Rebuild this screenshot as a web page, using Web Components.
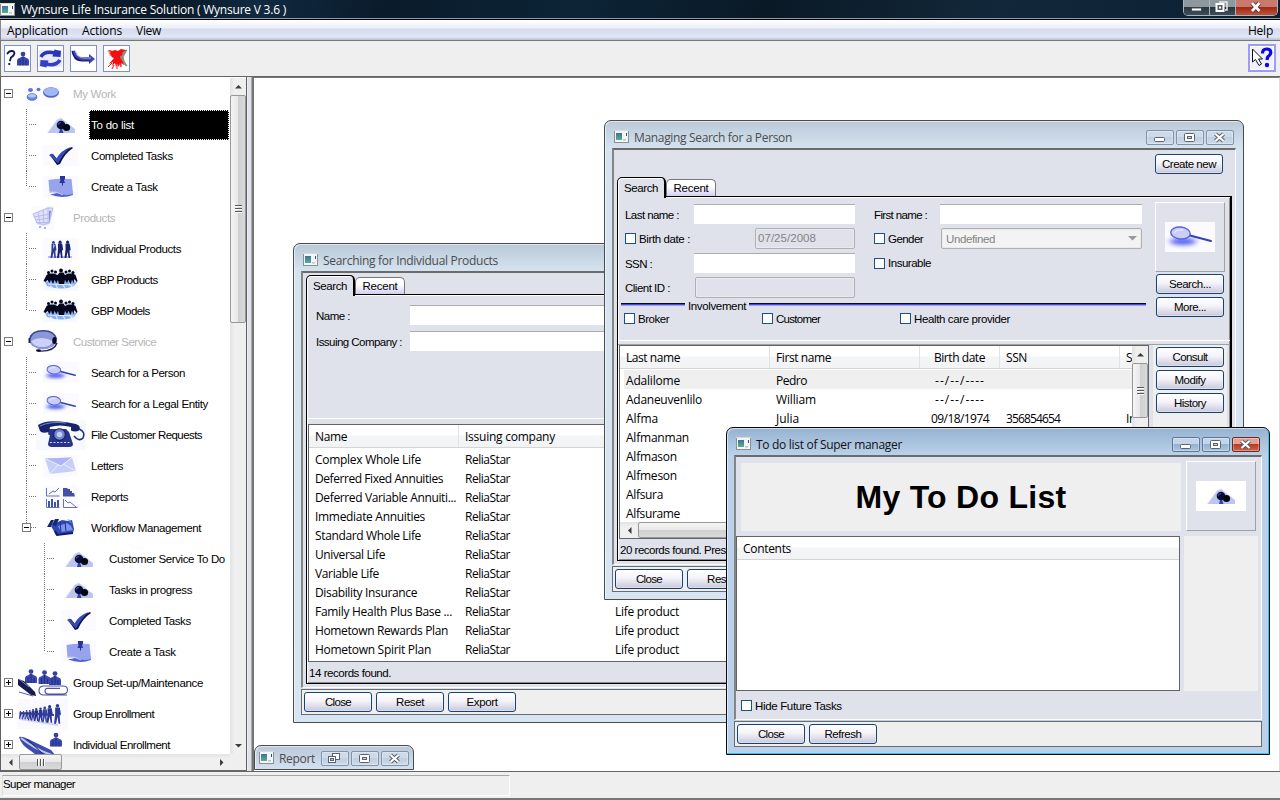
<!DOCTYPE html>
<html lang="en">
<head>
<meta charset="utf-8">
<title>Wynsure Life Insurance Solution</title>
<style>
html,body{margin:0;padding:0;width:1280px;height:800px;overflow:hidden;background:#efefef}
</style>
</head>
<body>
<wyn-app></wyn-app>
<script>
const t = (text, w) => `<fit-text w="${w}">${text}</fit-text>`;
const def = (name, build) => customElements.define(name, class extends HTMLElement {
  connectedCallback() {
    if (this.shadowRoot) return;
    this.attachShadow({mode: 'open'}).innerHTML = build(this);
  }
});

/* ---------- pictures, all on a 50 x 30 canvas ---------- */
const glass = `<rect width="50" height="30" fill="#fbfbff"/><ellipse cx="18" cy="19.500" rx="13" ry="3.800" fill="#4a58ec" filter="url(#b)" opacity=".9"/><path d="M25 13.500L46 19" stroke="#3340b8" stroke-width="2" stroke-linecap="round"/><ellipse cx="15.500" cy="11" rx="9.800" ry="6" fill="#c9cdf8" stroke="#5964d8" stroke-width="1.400" transform="rotate(6 15.500 11)"/><path d="M9 11q3-4 9-3" stroke="#f2f3ff" fill="none"/>`;
const man = (x, y, s = 1) => `<g transform="translate(${x} ${y}) scale(${s})"><circle cx="6" cy="2.600" r="2.400" fill="#3540a0"/><path d="M0 14V9q0-2 3-2.800L5 5h2l2 1.200Q12 7 12 9v5z" fill="#3a48b0"/><path d="M6 5v9M3 8v6M9 9v5" stroke="#1b2470" stroke-width=".8"/></g>`;
const walker = (x, y, s, c) => `<g transform="translate(${x} ${y}) scale(${s})" fill="${c}"><circle cx="3" cy="1.600" r="1.500"/><path d="M1 3h4l1 6-1 1-.3-2L5.400 17H4L3 11 1.800 17H0L1 9z"/></g>`;
const pics = {
  work: `<rect x="8" y="4" width="34" height="22" fill="#fcfcff"/><ellipse cx="12.500" cy="11" rx="2.500" ry="1.900" fill="#5f76dc"/><ellipse cx="20.500" cy="10.500" rx="2" ry="1.800" fill="#5f76dc"/><ellipse cx="14" cy="18" rx="4.800" ry="3.200" fill="#6f86e0" stroke="#5a70cc"/><ellipse cx="14" cy="16.800" rx="4" ry="1.800" fill="#b6c6f8"/><ellipse cx="33" cy="13.500" rx="8" ry="5.200" fill="#5067c8"/><ellipse cx="33" cy="12.700" rx="7.200" ry="4.200" fill="#a3b7f4"/>`,
  pin: `<path d="M11.500 23L21.500 9.500 25 8 39 19v4z" fill="#bcc4f0"/><path d="M11.500 23L21 10l4-2" stroke="#d8dcf8" fill="none"/><path d="M22.500 15l3 2 2 6h-4.500l1-4z" fill="#3244b4"/><circle cx="25" cy="15" r="4.300" fill="#0a0f30"/><circle cx="30.500" cy="17.500" r="3.600" fill="#050714"/><path d="M22 14.500q1-2 3-2" stroke="#3a4cc0" fill="none" stroke-width="1.200"/>`,
  check: `<rect x="7" y="4" width="35" height="21" fill="#fafaff"/><path d="M14 14l3-1 4 5Q26 9 36 6l1 1Q29 12 24 23l-3 1z" fill="#0c1448"/><path d="M13 14l3-1.500 4.500 5Q25 9.500 34.500 6 27 13 22 22.500z" fill="#3649b8"/>`,
  note: `<rect x="7" y="4" width="35" height="22" fill="#fafaff"/><path d="M14 22.500q12 4.500 23 .5l-1-5z" fill="#5261cc"/><path d="M12.500 8q9-2 23-1l1.500 15q-6 1.500-10 .5-6-3-13.500-2z" fill="#98a3ee"/><path d="M13 20q8-1 14 3" stroke="#c5ccfa" fill="none"/><path d="M24 4h5v3l-1 1 1 3h-2v2.500h-1V11h-2.500l1-3-.5-1z" fill="#26349c"/>`,
  cart: `<rect x="13" y="3" width="23" height="24" fill="#fafaff"/><path d="M15 11l15-7 5 1-3 16q-8 4-13 0z" fill="#dfe1fa"/><path d="M15 11l15-6 5 0M16 14l16-3M17 17l15-2M18 19.500h13M20 9.500l2 11M25 7l1 14M30 5l0 15M15 11l4 9q7 3 12 0l4-15" stroke="#b3b8ea" fill="none" stroke-width=".9"/><path d="M31 8l2-.5-2 13z" fill="#7e88d8"/><circle cx="27" cy="25" r="1" fill="#9197dc"/><circle cx="22" cy="24" r="1" fill="#9197dc"/>`,
  people: `<rect x="7" y="4" width="35" height="22" fill="#fafaff"/><path d="M12 23h24" stroke="#b4bcf0" stroke-width="2"/>${walker(14.500, 7, 1, '#2b3a98')}${walker(21, 6.500, 1.030, '#18216c')}${walker(28.500, 6.500, 1.030, '#18216c')}<path d="M17 9l2 3-2 3z" fill="#9fb0ee"/>`,
  crowd: `<rect x="7" y="4" width="35" height="22" fill="#f6f9ff"/><path d="M9 17q16-4 32 0l-3 4q-12 5-27 0z" fill="#86aef0"/><path d="M14 21l3 2M20 20l2 4M27 20l2 3M33 19l3 3M12 19l26 1" stroke="#e2efff" stroke-width="1.200"/><g fill="#04071c"><circle cx="12.500" cy="7.500" r="1.500"/><circle cx="16" cy="6" r="1.500"/><circle cx="19.500" cy="7" r="1.500"/><circle cx="25" cy="5.500" r="1.900"/><circle cx="30" cy="7" r="1.500"/><circle cx="33.500" cy="6" r="1.500"/><circle cx="37" cy="7.500" r="1.500"/><path d="M7.500 16l3-6 2.500-1.500h5l3.500 1.500 2-2.500h4l1.500 2.500 3-1.500h5l2.500 1.500 2 6-1 1-2-3-1 4-1.500-3-1.500 4-2-4-1.500 3-2-3-1 4h-5l-1-4-1.500 3-2-3-1.500 4-2-4-1.500 3-2-3-2 2z"/></g>`,
  headset: `<path d="M20 24q16 1 19-8" stroke="#20264e" stroke-width="1.400" fill="none"/><ellipse cx="25" cy="13" rx="13.500" ry="9.300" fill="#8c96da"/><path d="M12 11Q14 4 25 3.700T38.500 12" stroke="#39468c" stroke-width="1.500" fill="none"/><path d="M13 14q10-6 22 0-2 6-11 6-8 0-11-6z" fill="#cdd1f8"/><ellipse cx="36.500" cy="13.500" rx="2.200" ry="3.600" fill="#070a22"/><path d="M11.500 11v5" stroke="#1d2554" stroke-width="2"/><ellipse cx="20.500" cy="23.500" rx="2.500" ry="1.200" fill="#0b0e30"/>`,
  glass: `<g transform="translate(7 4) scale(.7)">${glass}</g>`,
  bigglass: glass,
  phone: `<rect width="50" height="30" fill="#f8f8ff"/><path d="M13 9q-2 7 1 6l-2 9q0 3 4 3h17q4 0 4-3L33 12l-3-3z" fill="#26348e"/><path d="M2 5Q9 0 24 1.500T42 5q3 2 1 5.500-4 2-8 0V7q-11-3-21 0L13 12q-7 2-9-1z" fill="#17236a"/><path d="M4 6Q14 1 30 3" stroke="#7286d8" fill="none"/><circle cx="23.500" cy="14.500" r="5.800" fill="#7283cf" stroke="#0c154c"/><circle cx="23.500" cy="14.500" r="2.800" fill="#c3cdf4"/><path d="M43 9q7 3 4 9-4 4-9-2" stroke="#202d7c" stroke-width="1.600" fill="none"/><path d="M14 22.500h20" stroke="#c7d1ff" stroke-dasharray="2 1.500"/>`,
  letter: `<rect x="7" y="4" width="35" height="22" fill="#fafaff"/><path d="M9 7.500L36 6.500 40 20 14 23z" fill="#c6cefa"/><path d="M9 7.500L25 15 36 6.500" fill="#aab5f2" stroke="#eef0ff"/><path d="M14 23l8-9M40 20L27 13" stroke="#eef0ff" fill="none"/>`,
  reports: `<rect x="7" y="4" width="35" height="22" fill="#fafaff"/><g stroke="#6570c4" fill="none"><path d="M10.500 6v8h13M13 12l4-3 2 1 4-4M10.500 17v8.500h13M27.500 17v8.500h14M29 18l3 3 2-1 6 5"/></g><path d="M27 6h4l1 1h2v2h2v2h2l1 3.500H27z" fill="#4450a8"/><g fill="#4350b4"><path d="M12 19h2v6h-2zM15 17h2v8h-2zM18 20h2v5h-2zM21 18h2v7h-2z"/></g>`,
  workflow: `<path d="M15 13l7-4 4-2 6 1 4-1 2 9-1 4-17 2z" fill="#3148b8"/><path d="M11 14l4-7h3l-3 7zM16 12l3-6h4l-3 7z" fill="#152674"/><path d="M22 13l9-3 4 3 2 4-12 2zM31 6l3 1 2 4" fill="#7c94ea"/><path d="M19 18l2 4 16-2" stroke="#0f1a68" fill="none" stroke-width="2"/><path d="M24 9l1 10M29 9l1 9" stroke="#1b2f90"/>`,
  setup: `${man(7, 1)}${man(20.500, 2)}${man(31, 3)}<path d="M0 11l6 2 11 11 1 4-5-1L0 17z" fill="#171d50"/><path d="M1 11l10 8" stroke="#7d87e0"/><path d="M1 24l14 4" stroke="#5a55cc"/><path d="M49 27H25q-4-.4-4-4.500t4-4.500h20q4.500 0 4.500 4T45 26H30q-3-.2-3-3t3-2.600h12" stroke="#4a51aa" stroke-width="1.100" fill="#fff"/>`,
  enroll: `<rect width="50" height="30" fill="#f9f9ff"/><path d="M0 19L40 25v2L2 21z" fill="#cfd4f8"/>${walker(1, 12, .45, '#2a3694')}${walker(4, 12, .48, '#2a3694')}${walker(7, 11, .55, '#2a3694')}${walker(10, 11, .6, '#232f8e')}${walker(13, 10, .68, '#2a3694')}${walker(16, 9, .76, '#202b88')}${walker(20, 8.500, .84, '#2a3694')}${walker(24, 7.500, .92, '#3442a4')}${walker(28.500, 6, 1.050, '#2a3694')}${walker(36, 5, 1.160, '#2d3a9e')}<path d="M2 14l34 2" stroke="#303c9c" stroke-width="2"/>`,
  individual: `${man(32, 2.500)}<path d="M1 7q3-1 9 2l23 11 5 6v5H26L13 21Q3 15 1 7z" fill="#3d4cac"/><path d="M3 8q15 12 31 17" stroke="#bcc6f8" stroke-width="2" fill="none"/><path d="M9 9l16 15" stroke="#1a2468"/>`
};
def('wy-icon', e => `<style>:host{display:block;width:50px;height:30px;flex:none}svg{display:block}</style>
<svg width="50" height="30" viewBox="0 0 50 30"><defs><filter id="b" x="-30%" y="-100%" width="160%" height="300%"><feGaussianBlur stdDeviation="3 2"/></filter></defs>${pics[e.getAttribute('name')]}</svg>`);

/* ---------- small controls ---------- */
def('app-icon', () => `<style>:host{display:block;width:15px;height:13px;flex:none}svg{display:block}</style>
<svg width="15" height="13"><defs><linearGradient id="g" x2="0" y2="1"><stop stop-color="#3e70a0"/><stop offset="1" stop-color="#58b08c"/></linearGradient></defs><rect x=".5" y=".5" width="14" height="12" fill="#f4f6f6" stroke="#8b8f92"/><path d="M0 .5h15" stroke="#d9d9d9"/><rect x="2" y="3" width="6" height="7" fill="url(#g)"/><path d="M12 3h1v3h-1z" fill="#2c4c80"/><path d="M9 9h3v1.500H9z" fill="#c0c4c8"/></svg>`);

def('xp-button', e => `<style>:host{display:flex;box-sizing:border-box;width:68px;height:20px;flex:none;align-items:center;justify-content:center;
border:1px solid #174373;border-radius:3px;background:linear-gradient(#fff,#f4f3fa 45%,#c9c8da);box-shadow:inset 0 0 0 1px rgba(255,255,255,.35)}</style>${t(e.getAttribute('label'), e.getAttribute('w'))}`);

def('xp-check', e => `<style>:host{display:flex;align-items:center;height:15px;gap:3px}i{box-sizing:border-box;width:11px;height:11px;border:1px solid #1c5180;background:#fff;flex:none}</style><i></i>${t(e.getAttribute('label'), e.getAttribute('w'))}`);

def('xp-field', () => `<style>:host{display:flex;align-items:center;box-sizing:border-box;height:20px;background:#fff;border-top:1px solid #abadb3;color:#838383}
:host([off]){height:21px;border:1px solid #b0b0b3;background:#dfe1eb;border-radius:2px;padding:0 2px 2px;box-shadow:inset 0 0 0 1px #e9e9ee}
:host([drop]){background:#f3f3f3;padding:0 4px;justify-content:space-between}</style><slot></slot>`);

def('picture-box', e => `<style>:host{display:grid;place-items:center;box-sizing:border-box;width:70px;height:70px;border:1px solid #fff;border-right-color:#a0a0a0;border-bottom-color:#a0a0a0}wy-icon{background:#fff}</style><wy-icon name="${e.getAttribute('name')}"></wy-icon>`);

def('scroll-bar', e => {
  const v = !e.hasAttribute('h');
  const a = e.getAttribute('thumb');
  const arrow = d => `<svg width="9" height="9" viewBox="0 0 9 9"><path d="${d}" fill="#3c3c3c"/></svg>`;
  return `<style>:host{display:flex;flex-direction:${v ? 'column' : 'row'};${v ? 'width' : 'height'}:16px;flex:none;background:linear-gradient(${v ? '90deg' : '180deg'},#e3e3e3,#f0f0f0 30%,#efefef)}
span{display:grid;place-items:center;flex:none;${v ? 'height:17px' : 'width:18px'}}
b{box-sizing:border-box;flex:none;display:grid;place-items:center;border:1px solid #979797;border-radius:2px;background:linear-gradient(${v ? '90deg' : '180deg'},#f5f5f5 0,#e8e8ea 48%,#cfcfd2 52%,#dadadc);${v ? 'height' : 'width'}:${a}px}
i{display:block;${v ? 'width:7px;height:8px' : 'width:8px;height:7px'};background:repeating-linear-gradient(${v ? '180deg' : '90deg'},#555 0 1px,#fff 1px 2px,transparent 2px 3px)}
u{flex:1}</style>
<span>${arrow(v ? 'M4.500 3L8 6.500H1z' : 'M3 4.500L6.500 1v7z')}</span><b><i></i></b><u></u><span>${arrow(v ? 'M4.500 6.500L8 3H1z' : 'M6.500 4.500L3 1v7z')}</span>`;
});

/* ---------- tabs ---------- */
def('tab-page', () => `<style>:host{display:flex;flex-direction:column;min-height:0}
nav{display:flex;align-items:flex-end;height:19px;flex:none}
.s,.r{box-sizing:border-box;display:flex;justify-content:center;align-items:center}
.s{width:49px;height:21px;margin-bottom:-2px;position:relative;background:#dfe1eb;border:1px solid #000;border-right-width:2px;border-bottom:0;border-radius:5px 5px 0 0;box-shadow:inset 1px 1px #fff}
.r{width:50px;height:17px;margin-left:0;border:1px solid #777;border-bottom:0;border-radius:5px 5px 0 0;background:linear-gradient(#fff,#fff 40%,#d3cff0)}
section{flex:1;min-height:0;display:flex;flex-direction:column;border:1px solid #000;border-right-width:2px;box-shadow:inset 1px 1px #fff,inset -1px -1px #8a8a8f;padding:1px 0 1px 0}</style>
<nav><div class="s">${t('Search', 34)}</div><div class="r">${t('Recent', 35)}</div></nav><section><slot></slot></section>`);

/* ---------- list ---------- */
const products = {
  cols: [[150, 'Name', 32], [150, 'Issuing company', 90], [260, '', 0]],
  rows: [['Complex Whole Life', 106], ['Deferred Fixed Annuities', 128], ['Deferred Variable Annuiti...', 141], ['Immediate Annuities', 110], ['Standard Whole Life', 106], ['Universal Life', 70], ['Variable Life', 64], ['Disability Insurance', 102], ['Family Health Plus Base ...', 137], ['Hometown Rewards Plan', 133], ['Hometown Spirit Plan', 116]]
    .map((r, i) => [r, ['ReliaStar', 45], i > 7 ? ['Life product', 64] : ['', 0]])
};
const persons = {
  cols: [[150, 'Last name', 54], [150, 'First name', 55], [80, 'Birth date', 51, 1], [120, 'SSN', 21], [12, 'S', 7]],
  rows: [[['Adalilome', 54], ['Pedro', 31], ['--/--/----', 50]], [['Adaneuvenlilo', 76], ['William', 40], ['--/--/----', 50]],
    [['Alfma', 32], ['Julia', 23], ['09/18/1974', 58], ['356854654', 54], ['In', 10]], [['Alfmanman', 63]], [['Alfmason', 51]], [['Alfmeson', 51]], [['Alfsura', 37]], [['Alfsurame', 54]]]
};
const contents = {cols: [[440, 'Contents', 48]], rows: []};
const lists = {products, persons, contents};
def('list-view', e => {
  const d = lists[e.getAttribute('data')];
  const tpl = d.cols.map(c => c[0] + 'px').join(' ');
  const cell = (c, i) => `<div class="${d.cols[i][3] ? 'c' : ''}">${c && c[0] ? t(c[0], c[1]) : ''}</div>`;
  return `<style>:host{display:flex;flex-direction:column;box-sizing:border-box;background:#fff;border:1px solid #646464;font:12px "Open Sans","Noto Sans",sans-serif;overflow:hidden}
.top{display:flex;flex:1;min-height:0}.body{flex:1;overflow:hidden}
.h,.row{display:grid;grid-template-columns:${tpl};align-items:center}
.h{height:22px;border-bottom:1px solid #d5d5d5;background:linear-gradient(#fff 45%,#f4f5f7 50%,#f2f3f5)}
.h div{height:22px;border-right:1px solid #e2e3e5;box-sizing:border-box;display:flex;align-items:center}
.h div:last-child{border-right:0}
div.c{display:flex;justify-content:center;padding-left:0}
.row{height:19px}.rows{padding-top:1px}
.h div,.row div{padding-left:6px;padding-top:1px;white-space:nowrap;overflow:hidden}
.h div.c,.row div.c{padding-left:0}
:host([hot]) .row:first-child{background:linear-gradient(90deg,#fff 4px,#efefef 4px)}</style>
<div class="top"><div class="body"><div class="h">${d.cols.map((c, i) => cell([c[1], c[2]], i)).join('')}</div>
<div class="rows">${d.rows.map(r => `<div class="row">${r.map(cell).join('')}</div>`).join('')}</div></div><slot name="v"></slot></div><slot name="h"></slot>`;
});

/* ---------- window chrome ---------- */
const glyphs = {
  min: '<rect x="8.500" y="7.500" width="10" height="4" rx="1" fill="#fff" stroke="#5c6370"/>',
  max: '<rect x="8.500" y="3.500" width="10" height="8" rx="1" fill="#fff" stroke="#5c6370"/><rect x="11.500" y="6.500" width="4" height="2" fill="#c8d4e2" stroke="#5c6370"/>',
  restore: '<rect x="11.500" y="2.500" width="7" height="6" fill="#fff" stroke="#5c6370"/><rect x="7.500" y="5.500" width="7" height="6" fill="#fff" stroke="#5c6370"/><rect x="9.500" y="7.500" width="3" height="2" fill="#b8c6d8" stroke="#5c6370"/>',
  close: '<path d="M9.500 4l8 7M17.500 4l-8 7" stroke="#565d6a" stroke-width="4.200"/><path d="M9.500 4l8 7M17.500 4l-8 7" stroke="#fff" stroke-width="2.200"/>'
};
def('frame-button', e => `<style>:host{display:block;box-sizing:border-box;width:28px;height:15px;border:1px solid #8492a8;border-radius:2px;background:linear-gradient(#ccdaea 45%,#bfcfe1 50%,#cddbea);box-shadow:inset 0 0 0 1px rgba(255,255,255,.3);flex:none}
:host([hot]){border-color:#5f7796;background:linear-gradient(#c2d5ea 45%,#94b1d1 50%,#abc6e2)}
:host([hot][kind=close]){border-color:#6d2a2a;background:linear-gradient(#e2a394 45%,#b93a20 50%,#cf6648)}
svg{display:block;margin:-1px}</style><svg width="28" height="15">${glyphs[e.getAttribute('kind')]}</svg>`);

def('mdi-window', e => {
  const g = n => e.getAttribute(n), act = e.hasAttribute('active');
  const hot = act ? 'hot' : '', small = e.hasAttribute('small');
  return `<style>:host{position:absolute;left:${g('x')}px;top:${g('y')}px;width:${g('w')}px;height:${g('h')}px;box-sizing:border-box;display:flex;flex-direction:column;overflow:hidden;
border:1px solid ${act ? '#0a0a0a' : '#4b4b4b'};border-radius:7px 7px 0 0;padding:0 7px ${small ? 0 : 7}px;
background:${small ? 'linear-gradient(#b9c9d9,#d3e1ee)' : act ? 'linear-gradient(#97b3d1,#b9d1ea 27px,#b9d1ea)' : 'linear-gradient(#bac9d8,#d5e3f0 27px,#d7e4f1)'};
box-shadow:${act ? 'inset -1px -1px #35c4e8,' : ''}inset 1px 1px rgba(255,255,255,.55)}
header{display:flex;align-items:center;height:${small ? 24 : 27}px;flex:none;gap:2px;font:12px "Open Sans","Noto Sans",sans-serif;color:${act ? '#111' : '#4c4c4c'};padding:${small ? '1px 0 0' : '6px 2px 0 2px'};box-sizing:border-box;margin:${small ? '0 -3px' : '0'}}
app-icon{margin-top:-2px;margin-right:3px}
frame-button{margin-top:-1px}
.sp{flex:1}
main{flex:1;min-height:0;display:flex;flex-direction:column;background:#dfe1eb;border:2px solid #6b6b6b;border-left-color:#858585;border-right:1px solid #fff;border-bottom:1px solid #fff;${small ? 'display:none' : ''}}
footer{display:${small ? 'none' : 'flex'};box-sizing:border-box;height:26px;margin-top:1px;border:1px solid #6b6b6b;background:#efefef;gap:4px;padding:2px;flex:none}
</style><header><app-icon></app-icon>${t(g('caption'), g('cw'))}<span class="sp"></span><frame-button kind="${small ? 'restore' : 'min'}" ${hot}></frame-button><frame-button kind="max" ${hot}></frame-button><frame-button kind="close" ${hot}></frame-button></header>
<main><slot></slot></main><footer><slot name="actions"></slot></footer>`;
});

/* ---------- the three windows' forms ---------- */
def('product-search', () => `<style>:host{display:flex;flex:1;min-height:0;padding:2px 0 3px 3px}tab-page{flex:1}
.form{box-sizing:border-box;height:123px;border-bottom:1px solid #fff;display:grid;grid-template-columns:94px 1fr;grid-auto-rows:20px;row-gap:6px;padding:9px 0 0 9px;align-items:center;flex:none}
.form fit-text{padding-top:1px}
list-view{height:238px;margin:5px 0 0 1px;flex:none}p{margin:0;flex:1;display:flex;align-items:center;padding:1px 0 0 2px}</style>
<tab-page><div class="form">${t('Name :', 34)}<xp-field></xp-field>${t('Issuing Company :', 86)}<xp-field></xp-field></div><list-view data="products"></list-view><p>${t('14 records found.', 82)}</p></tab-page>`);

def('person-search', () => `<style>:host{display:flex;flex-direction:column;flex:1;min-height:0;padding:4px 3px 3px 3px}
.new{display:flex;justify-content:flex-end;height:23px;padding-right:9px;flex:none}
tab-page{flex:1}
.upper{display:flex;height:142px;border-bottom:1px solid #fff;flex:none}
.form{width:525px;padding:6px 0 0 3px;flex:none}
.g{display:grid;grid-template-columns:70px 160px 19px 67px 201px;grid-template-rows:20px 21px 20px 21px;row-gap:4px;align-items:center;padding-left:4px}
.g>fit-text{padding-top:1px}
.g>.d{width:100px;box-sizing:border-box;justify-self:end}
.g>xp-field:not([off]){margin-left:-1px}
.inv{display:flex;align-items:center;gap:3px;height:12px;margin:1px 0 0}
.inv fit-text{padding-top:1px}
.inv i{height:1px;background:#0a0a14;border-top:0;box-shadow:0 1px #4a48d8,0 2px #9c9cf2;width:64px;margin-top:-3px}.inv i:last-child{flex:1}
.ch{display:grid;grid-template-columns:138px 138px 1fr;padding-left:3px}
.side{width:70px;margin:4px 0 0 9px;display:flex;flex-direction:column;align-items:center;gap:3px}
.side picture-box{margin-bottom:-1px}
.low{display:flex;flex:1;min-height:0;margin-top:3px;border-top:1px solid #a0a0a0}
.lc{width:530px;margin-left:1px;display:flex;flex-direction:column}list-view{height:194px;flex:none}
p{margin:0;flex:1;display:flex;align-items:center;padding:1px 0 0 1px}
.btn{width:74px;margin:0 0 0 4px;background:#efefef;display:flex;flex-direction:column;align-items:center;gap:3px;padding-top:2px}</style>
<div class="new"><xp-button label="Create new" w="54"></xp-button></div>
<tab-page><div class="upper"><div class="form"><div class="g">
${t('Last name :', 54)}<xp-field></xp-field><span></span>${t('First name :', 53)}<xp-field></xp-field>
<xp-check label="Birth date :" w="51"></xp-check><xp-field off class="d">${t('07/25/2008', 58)}</xp-field><span></span><xp-check label="Gender" w="35"></xp-check><xp-field off drop>${t('Undefined', 49)}<svg width="9" height="5"><path d="M0 0h9L4.500 4.500z" fill="#9a9a9a"/></svg></xp-field>
${t('SSN :', 27)}<xp-field></xp-field><span></span><xp-check label="Insurable" w="43"></xp-check><span></span>
${t('Client ID :', 45)}<xp-field off></xp-field></div>
<div class="inv"><i></i>${t('Involvement', 58)}<i></i></div>
<div class="ch"><xp-check label="Broker" w="31"></xp-check><xp-check label="Customer" w="44"></xp-check><xp-check label="Health care provider" w="96"></xp-check></div></div>
<div class="side"><picture-box name="bigglass"></picture-box><xp-button label="Search..." w="42"></xp-button><xp-button label="More..." w="32"></xp-button></div></div>
<div class="low"><div class="lc"><list-view data="persons" hot><scroll-bar slot="v" thumb="55"></scroll-bar><scroll-bar slot="h" h thumb="300"></scroll-bar></list-view><p>${t('20 records found. Press', 111)}</p></div>
<div class="btn"><xp-button label="Consult" w="35"></xp-button><xp-button label="Modify" w="31"></xp-button><xp-button label="History" w="32"></xp-button></div></div></tab-page>`);

def('todo-list', () => `<style>:host{display:grid;grid-template-columns:444px 1fr;grid-template-rows:79px 155px 1fr;flex:1;min-height:0}
h1{margin:6px 0 5px 5px;width:440px;background:#efefef;display:grid;place-items:center;font:bold 32px "Liberation Sans",Arial,sans-serif}
picture-box{margin:4px 0 0 6px;justify-self:start}
.pane{background:#efefef;width:74px;margin-left:4px}
.f{padding:7px 0 0 5px;grid-column:span 2}</style>
<h1>${t('My To Do List', 211)}</h1><picture-box name="pin"></picture-box><list-view data="contents"></list-view><div class="pane"></div><div class="f"><xp-check label="Hide Future Tasks" w="87"></xp-check></div>`);

/* ---------- navigation tree ---------- */
const tree = [[1, 'work', 'My Work', 43, 'open dim'], [2, 'pin', 'To do list', 43, 'sel'], [2, 'check', 'Completed Tasks', 82], [2, 'note', 'Create a Task', 67, 'last'],
  [1, 'cart', 'Products', 42, 'open dim'], [2, 'people', 'Individual Products', 90], [2, 'crowd', 'GBP Products', 67], [2, 'crowd', 'GBP Models', 59, 'last'],
  [1, 'headset', 'Customer Service', 83, 'open dim'], [2, 'glass', 'Search for a Person', 94], [2, 'glass', 'Search for a Legal Entity', 117], [2, 'phone', 'File Customer Requests', 111], [2, 'letter', 'Letters', 32], [2, 'reports', 'Reports', 37], [2, 'workflow', 'Workflow Management', 110, 'open last'],
  [3, 'pin', 'Customer Service To Do', 116], [3, 'pin', 'Tasks in progress', 83], [3, 'check', 'Completed Tasks', 82], [3, 'note', 'Create a Task', 67, 'last'],
  [1, 'setup', 'Group Set-up/Maintenance', 130, 'shut'], [1, 'enroll', 'Group Enrollment', 81, 'shut'], [1, 'individual', 'Individual Enrollment', 97, 'shut']];
def('tree-row', e => {
  const [lv, icon, label, w, flags = ''] = tree[+e.getAttribute('index')];
  const x = 18 * lv, vx = x - 9.500;
  let s = '';
  if (lv > 1) s += `<path d="M${vx} 0V${flags.includes('last') ? 16 : 31}" stroke="#777" stroke-dasharray="1 1"/><path d="M${vx + 2.500} 15.500H${x}" stroke="#777" stroke-dasharray="1 1"/>`;
  if (/open|shut/.test(flags)) s += `<rect x="${x - 13.500}" y="11.500" width="8" height="8" fill="#fff" stroke="#7b7b7b"/><path d="M${x - 12} 15.500h5${flags.includes('shut') ? `M${vx} 13v5` : ''}" stroke="#000"/>`;
  return `<style>:host{display:flex;height:31px;align-items:center;flex:none;color:${flags.includes('dim') ? '#b5b5b5' : '#000'}}svg{flex:none;display:block}
span{margin-left:3px;padding-left:2px;height:29px;display:flex;align-items:center;flex:1;white-space:nowrap}
.sel{background:#000;color:#fff;outline:1px dotted #fff;outline-offset:-1px;height:30px;margin-bottom:0}</style>
<svg width="${x}" height="31">${s}</svg><wy-icon name="${icon}"></wy-icon><span class="${flags.includes('sel') ? 'sel' : ''}">${t(label, w)}</span>`;
});
def('nav-tree', () => `<style>:host{display:flex;flex-direction:column;box-sizing:border-box;width:247px;border-left:1px solid #5f5f5f;border-right:1px solid #5f5f5f;background:#fff;overflow:hidden;padding-top:1px}
.top{display:flex;flex:1;min-height:0}.rows{width:229px;overflow:hidden;display:flex;flex-direction:column;margin-left:-1px;padding-right:1px;flex:none}
.bot{display:flex;background:#efefef;border-bottom:1px solid #666}.bot scroll-bar{width:229px}</style>
<div class="top"><div class="rows">${tree.map((_, i) => `<tree-row index="${i}"></tree-row>`).join('')}</div><scroll-bar thumb="228"></scroll-bar></div><div class="bot"><scroll-bar h thumb="43"></scroll-bar></div>`);

/* ---------- application frame ---------- */
def('title-bar', () => `<style>:host{display:flex;height:20px;box-sizing:border-box;align-items:center;background:linear-gradient(100deg,#0c1c2b,#0a1a2a 14%,#102a40 20%,#0a1b2b 30%,#0c2436 45%,#0a1926 60%,#12283a 78%,#0b1f33);border-bottom:1px solid #000;box-shadow:inset 0 -1px #8b9aa8;color:#fff;font:12px "Open Sans","Noto Sans",sans-serif;padding:0 2px 0 0}
app-icon{margin:-1px 6px 0 0}.sp{flex:1}
.b{display:flex;align-self:flex-start;height:16px;border:1px solid #aab4bc;border-top:0;border-radius:0 0 5px 5px;overflow:hidden;box-sizing:border-box}
.b span{display:block;width:25px;border-right:1px solid #aab4bc;background:linear-gradient(#8d989f 45%,#2b3740 50%,#3d4e5a)}.b span:last-child{width:41px;border:0;background:linear-gradient(#c97a6c 45%,#a02814 50%,#c0533c)}svg{display:block}</style>
<app-icon></app-icon>${t('Wynsure Life Insurance Solution ( Wynsure V 3.6 )', 265)}<span class="sp"></span>
<div class="b"><span><svg width="25" height="15"><rect x="7.500" y="8" width="10" height="3" fill="#fff" stroke="#444c55"/></svg></span><span><svg width="25" height="15"><path d="M9 2h8v8h-2" fill="none" stroke="#e8e8e8" stroke-width="1.500"/><rect x="6.500" y="4" width="7" height="7" fill="#555e66" stroke="#fff" stroke-width="2"/><rect x="9" y="6.500" width="2" height="2" fill="#fff"/></svg></span><span><svg width="41" height="15"><path d="M16 3l7.500 8M23.500 3L16 11" stroke="#5c2c28" stroke-width="4.500"/><path d="M16 3l7.500 8M23.500 3L16 11" stroke="#fff" stroke-width="2.800"/></svg></span></div>`);

def('menu-bar', () => `<style>:host{display:flex;height:20px;box-sizing:border-box;align-items:center;background:linear-gradient(#fff,#eceff8 40%,#d5dbee 45%,#e2e7f6 85%,#b9bed2);font:12px "Open Sans","Noto Sans",sans-serif;padding:0 7px 0 6px;gap:14px;border-left:1px solid #888}.sp{flex:1}</style>
${t('Application', 61)}${t('Actions', 40)}${t('View', 25)}<span class="sp"></span>${t('Help', 25)}`);

def('tool-bar', () => `<style>:host{display:flex;height:37px;box-sizing:border-box;border-top:1px solid #777;border-bottom:1px solid #666;border-left:1px solid #777;background:#efefef;padding:4px 4px 0 3px;gap:6px;align-items:flex-start}
svg{display:block;box-sizing:border-box;width:27px;height:27px;border:1px solid #7b8ed6;background:#fff;flex:none}.sp{flex:1}svg.h{width:28px;height:28px;margin-top:-1px;border:2px solid #9a9cf8}</style>
<svg viewBox="0 0 25 25"><path d="M2.500 7.500Q4 4.800 7 5 10.500 5.500 9 8.500 8 10.500 6 11.500L5 14.500M4 18h.5" stroke="#11164e" stroke-width="1.800" fill="none" stroke-linecap="round"/>${man(12, 5.500, 1)}</svg>
<svg viewBox="0 0 25 25"><rect x="1" y="4" width="23" height="17" fill="#e8eafd"/><path d="M3 11q3-6.500 14-4" stroke="#2936b8" stroke-width="3.600" fill="none"/><path d="M16.500 3.500L23 5l-.5 6-8-.5z" fill="#2936b8"/><path d="M22 14q-4 6.500-14 4" stroke="#3440cc" stroke-width="3.600" fill="none"/><path d="M8.500 21.500L2 20l.5-6 8 .5z" fill="#3440cc"/></svg>
<svg viewBox="0 0 25 25"><path d="M1 5l3-.5q1 6 6 6.500h8V8l6 5-6 5v-3H9Q2 15 1 5z" fill="#3e41b4"/><path d="M1 5q2 9 10 10h8" stroke="#14185c" fill="none" stroke-width="1.200"/><path d="M5 6q2 6 8 6h7" stroke="#a9aef6" fill="none"/></svg>
<svg viewBox="0 0 25 25"><path d="M20 5l3-1-4 7 1 4 3 5-2-1-5-7z" stroke="#8c8c8c" fill="#8c8c8c"/><path d="M3 5l3-1 2 1 3-1 3 1 3-2 5 1-3 2-1 3-2 2 1 2 2 3 1 3-3-2 1 4-3-4v4l-2-3-1 3-1-4-3 3 1-4-4 2 5-6-3-1 1-1-3-1 2-1-3-1 3-1z" fill="#f60d0d"/><path d="M8 23l2-4M4 21l4-4M13 23v-4M17 21l-2-4" stroke="#f60d0d"/></svg>
<span class="sp"></span>
<svg class="h" viewBox="0 0 24 24"><rect x="1" y="1" width="22" height="22" fill="#f0f0ff"/><path d="M2.500 3v13l3-2.500 3.500 6 2.500-1.500-3-5h4z" fill="#fff" stroke="#111"/><path d="M12.500 7.500q0-4.500 4-4.500 4.500 0 4.200 4-.3 2-2.500 3.500-1 1-1.200 3.500" stroke="#0808e4" stroke-width="3.200" fill="none"/><circle cx="17" cy="19" r="2.200" fill="#0808e4"/></svg>`);

def('status-bar', () => `<style>:host{display:flex;height:29px;box-sizing:border-box;background:#efefef;border-top:1px solid #666;padding:3px 2px;border-bottom:2px solid #777}
div{width:508px;height:21px;box-sizing:border-box;border:1px solid #fff;border-top-color:#a8a8a8;border-left-color:#ddd;display:flex;align-items:center;padding:0 0 3px 0}</style><div>${t('Super manager', 72)}</div>`);

def('mdi-desk', () => `<style>:host{display:block;position:relative;flex:1;background:#fff;border-left:2px solid #757575;border-top:1px solid #757575;border-right:1px solid #ddd;box-sizing:border-box;overflow:hidden}</style><slot></slot>`);

def('wyn-app', () => `<style>:host{display:flex;flex-direction:column;width:1280px;height:800px;overflow:hidden;font:11.500px "Liberation Sans",Arial,sans-serif;color:#000;background:#efefef}
.mid{display:flex;flex:1;min-height:0}.split{width:5px;background:linear-gradient(90deg,#efefef 1px,#dfe1eb 1px 4px,#aaa 4px);flex:none}</style>
<title-bar></title-bar><menu-bar></menu-bar><tool-bar></tool-bar>
<div class="mid"><nav-tree></nav-tree><div class="split"></div><mdi-desk>
<mdi-window x="39" y="165" w="600" h="480" caption="Searching for Individual Products" cw="175"><product-search></product-search><xp-button slot="actions" label="Close" w="26"></xp-button><xp-button slot="actions" label="Reset" w="28"></xp-button><xp-button slot="actions" label="Export" w="31"></xp-button></mdi-window>
<mdi-window x="350" y="42" w="640" h="480" caption="Managing Search for a Person" cw="158"><person-search></person-search><xp-button slot="actions" label="Close" w="26"></xp-button><xp-button slot="actions" label="Reset" w="28"></xp-button></mdi-window>
<mdi-window active x="472" y="349" w="544" h="328" caption="To do list of Super manager" cw="146"><todo-list></todo-list><xp-button slot="actions" label="Close" w="26"></xp-button><xp-button slot="actions" label="Refresh" w="37"></xp-button></mdi-window>
<mdi-window small x="0" y="667" w="160" h="25" caption="Report" cw="36"></mdi-window>
</mdi-desk></div><status-bar></status-bar>`);

/* Spreads the letters of a label over a set width; registered last, when every tree is in place. */
customElements.define('fit-text', class extends HTMLElement {
  connectedCallback() {
    if (this.shadowRoot) return;
    this.attachShadow({mode: 'open'}).innerHTML = '<style>:host{display:inline-block;white-space:pre;line-height:normal}</style><slot></slot>';
    const w = +this.getAttribute('w'), s = this.textContent;
    if (!w || !s) return;
    const c = document.createElement('canvas').getContext('2d'), cs = getComputedStyle(this);
    c.font = `${cs.fontWeight} ${cs.fontSize} ${cs.fontFamily}`;
    const ls = (w - c.measureText(s).width) / s.length;
    this.style.letterSpacing = ls.toFixed(3) + 'px';
  }
});
</script>
</body>
</html>
